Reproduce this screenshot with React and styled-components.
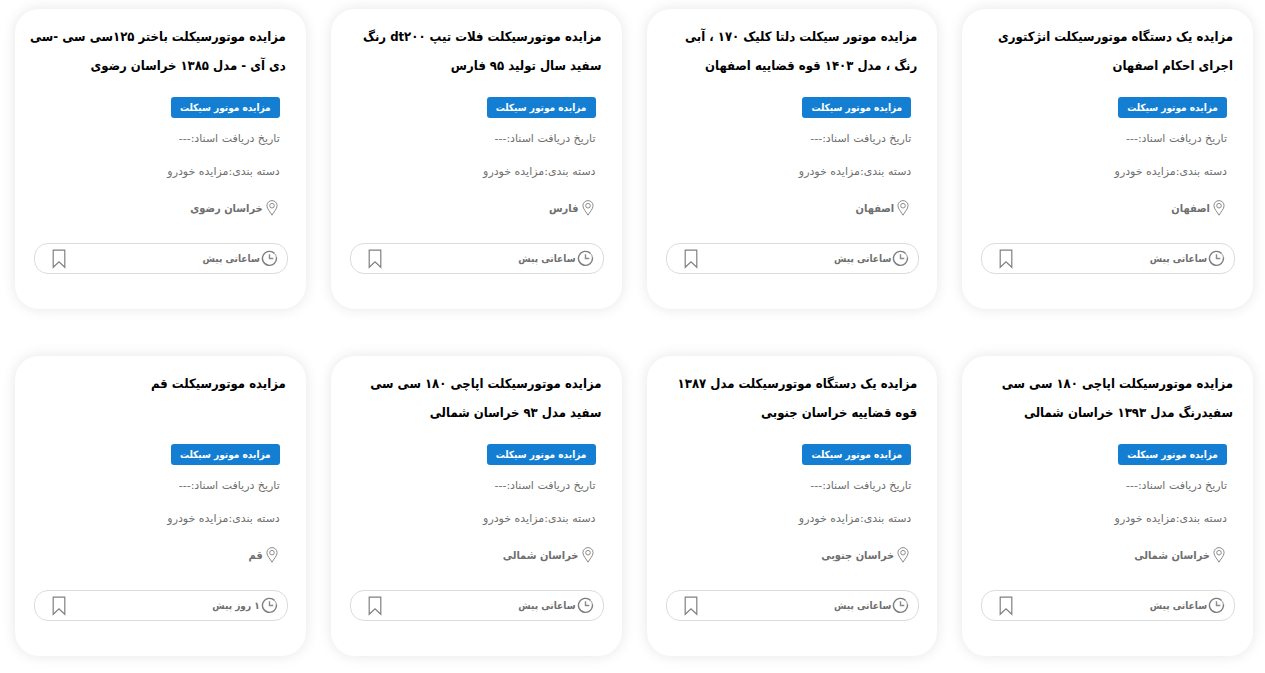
import React from "react";
import styled, { createGlobalStyle } from "styled-components";

const GlobalStyle = createGlobalStyle`
  *, *::before, *::after { box-sizing: border-box; }
  body {
    margin: 0;
    background: #fff;
    color: #000;
    font-family: "DejaVu Sans Condensed", "DejaVu Sans", sans-serif;
  }
`;

const Grid = styled.main`
  display: grid;
  grid-template-columns: repeat(4, minmax(0, 1fr));
  gap: 47px 25px;
  padding: 9px 12px 16px 15px;
`;

const Card = styled.article`
  display: flex;
  flex-direction: column;
  padding: 13px 18px 35px 19px;
  border-radius: 24px;
  background: #fff;
  box-shadow: 0 0 14px rgba(0, 0, 0, 0.1);
`;

const Title = styled.h2`
  min-height: 58px;
  margin: 0 2px;
  font-size: 13px;
  font-weight: 700;
  line-height: 29px;
  white-space: nowrap;
`;

const TitleLink = styled.a`
  color: inherit;
  text-decoration: none;
`;

const Details = styled.div`
  display: flex;
  flex-direction: column;
  align-items: flex-start;
  padding: 17px 8px 0;
`;

const Badge = styled.a`
  display: flex;
  justify-content: center;
  width: 109px;
  margin-bottom: 4px;
  border-radius: 3px;
  background: #147fd2;
  color: #fff;
  font-size: 10px;
  font-weight: 700;
  line-height: 21px;
  text-decoration: none;
  white-space: nowrap;
`;

const Meta = styled.p`
  margin: 0;
  color: #6f6f6f;
  font-family: "DejaVu Sans", sans-serif;
  font-size: 11px;
  line-height: 33px;
  white-space: nowrap;
`;

const Place = styled.p`
  display: flex;
  align-items: center;
  gap: 2px;
  height: 42px;
  margin: 0;
  padding-right: 1px;
  color: #6f6f6f;
  font-size: 11px;
  font-weight: 700;
  line-height: 20px;

  svg { margin-bottom: 3px; }
`;

const Footer = styled.footer`
  display: flex;
  align-items: center;
  justify-content: space-between;
  height: 31px;
  margin-top: 13px;
  padding: 0 9px 0 17px;
  border: 1px solid #dcdcdc;
  border-radius: 14px;
`;

const Time = styled.span`
  display: flex;
  align-items: center;
  gap: 1px;
  color: #6f6f6f;
  font-size: 10px;
  font-weight: 700;
  line-height: 20px;
`;

const SaveButton = styled.button`
  display: flex;
  padding: 0;
  border: 0;
  background: none;
  cursor: pointer;
`;

const PinIcon = () => (
  <svg width="14" height="16" viewBox="0 0 14 16" fill="none" stroke="#8c8c8c" aria-hidden="true">
    <path d="M7 15.2C5.6 12.4 1.9 8.9 1.9 5.7a5.1 5.1 0 0 1 10.2 0C12.1 8.9 8.4 12.4 7 15.2Z" />
    <circle cx="7" cy="5.7" r="2.3" />
  </svg>
);

const ClockIcon = () => (
  <svg width="17" height="17" viewBox="0 0 17 17" fill="none" stroke="#7d7d7d" aria-hidden="true">
    <path d="M13.6 3.6A7 7 0 1 0 15.4 7.4" strokeWidth="1.4" />
    <path d="M15.4 7.6a7 7 0 0 0-1.6-3.8" strokeWidth="0.8" />
    <path d="M8.5 4.2v4.3h3.8" strokeWidth="1.4" stroke="#8c8c8c" />
  </svg>
);

const BookmarkIcon = () => (
  <svg width="14" height="20" viewBox="0 0 14 20" fill="none" stroke="#808080" strokeWidth="1.2" aria-hidden="true">
    <path d="M1.2 1.1h11.6v17.2L7 12.8l-5.8 5.5Z" />
  </svg>
);

const HOURS = "ساعاتی پیش";

const auctions = [
  { title: ["مزایده یک دستگاه موتورسیکلت انژکتوری", "اجرای احکام اصفهان"], place: "اصفهان", time: HOURS },
  { title: ["مزایده موتور سیکلت دلتا کلیک ۱۷۰ ، آبی", "رنگ ، مدل ۱۴۰۳ قوه قضاییه اصفهان"], place: "اصفهان", time: HOURS },
  { title: ["مزایده موتورسیکلت فلات تیپ dt۲۰۰ رنگ", "سفید سال تولید ۹۵ فارس"], place: "فارس", time: HOURS },
  { title: ["مزایده موتورسیکلت باختر ۱۲۵سی سی -سی", "دی آی - مدل ۱۳۸۵ خراسان رضوی"], place: "خراسان رضوی", time: HOURS },
  { title: ["مزایده موتورسیکلت اپاچی ۱۸۰ سی سی", "سفیدرنگ مدل ۱۳۹۳ خراسان شمالی"], place: "خراسان شمالی", time: HOURS },
  { title: ["مزایده یک دستگاه موتورسیکلت مدل ۱۳۸۷", "قوه قضاییه خراسان جنوبی"], place: "خراسان جنوبی", time: HOURS },
  { title: ["مزایده موتورسیکلت اپاچی ۱۸۰ سی سی", "سفید مدل ۹۳ خراسان شمالی"], place: "خراسان شمالی", time: HOURS },
  { title: ["مزایده موتورسیکلت قم"], place: "قم", time: "۱ روز پیش" },
];

function AuctionCard({ title, place, time }) {
  return (
    <Card>
      <Title>
        <TitleLink href="#">
          {title.map((line, i) => (
            <React.Fragment key={line}>
              {i > 0 && <br />}
              {line}
            </React.Fragment>
          ))}
        </TitleLink>
      </Title>
      <Details>
        <Badge href="#">مزایده موتور سیکلت</Badge>
        <Meta>تاریخ دریافت اسناد:---</Meta>
        <Meta>دسته بندی:مزایده خودرو</Meta>
        <Place>
          <PinIcon />
          {place}
        </Place>
      </Details>
      <Footer>
        <Time>
          <ClockIcon />
          {time}
        </Time>
        <SaveButton type="button" aria-label="ذخیره">
          <BookmarkIcon />
        </SaveButton>
      </Footer>
    </Card>
  );
}

export default function App() {
  return (
    <>
      <GlobalStyle />
      <Grid dir="rtl" lang="fa">
        {auctions.map((auction, i) => (
          <AuctionCard key={i} {...auction} />
        ))}
      </Grid>
    </>
  );
}
